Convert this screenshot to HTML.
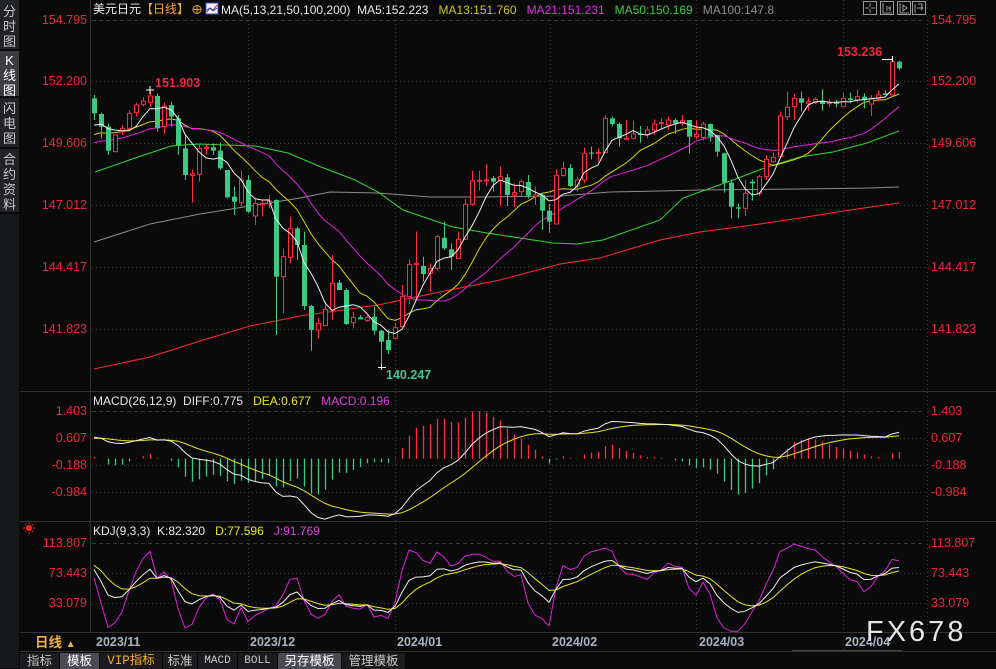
<!DOCTYPE html>
<html><head><meta charset="utf-8">
<style>
*{margin:0;padding:0;box-sizing:border-box}
body{background:#0a0a0a;width:996px;height:669px;overflow:hidden;position:relative;font-family:"Liberation Sans","Noto Sans CJK SC",sans-serif}
.t{position:absolute;white-space:nowrap;font-size:12px;line-height:14px}
.ax{position:absolute;font-size:12.5px;color:#e8283c;line-height:14px}
.axl{right:909px;text-align:right}
.axr{left:931px}
.side{position:absolute;left:0;width:19px;background:#222327;color:#c8c8c8;font-size:13px;line-height:15px;text-align:center;border-bottom:1px solid #0a0a0a}
.tab{position:absolute;top:653px;height:16px;font-size:12.5px;line-height:16px;text-align:center;color:#c8c8c8;background:#1c1c1e;border-right:1px solid #0a0a0a}
.date{position:absolute;top:635px;font-size:12.5px;font-weight:bold;color:#a8b4c4}
</style></head><body>
<svg id="s" width="996" height="669" style="position:absolute;left:0;top:0">
<g stroke="#333" stroke-width="1" fill="none">
<line x1="90.5" y1="0" x2="90.5" y2="632"/>
<line x1="20" y1="391.5" x2="996" y2="391.5"/>
<line x1="20" y1="521.5" x2="996" y2="521.5"/>
<line x1="20" y1="632.5" x2="996" y2="632.5"/>
<line x1="20" y1="651.5" x2="996" y2="651.5"/>
</g>
<g stroke="#3a3a3a" stroke-width="1" stroke-dasharray="1,3" fill="none">
<line x1="927.5" y1="0" x2="927.5" y2="632"/>
<line x1="248.5" y1="0" x2="248.5" y2="650"/>
<line x1="395.5" y1="0" x2="395.5" y2="650"/>
<line x1="550.5" y1="0" x2="550.5" y2="632"/>
<line x1="696.5" y1="0" x2="696.5" y2="632"/>
<line x1="843.5" y1="0" x2="843.5" y2="650"/>
<line x1="92" y1="81.5" x2="925" y2="81.5"/>
<line x1="92" y1="143.5" x2="925" y2="143.5"/>
<line x1="92" y1="205.5" x2="925" y2="205.5"/>
<line x1="92" y1="267.5" x2="925" y2="267.5"/>
<line x1="92" y1="329.5" x2="925" y2="329.5"/>
<line x1="92" y1="438.5" x2="925" y2="438.5"/>
<line x1="92" y1="465.5" x2="925" y2="465.5"/>
<line x1="92" y1="492.5" x2="925" y2="492.5"/>
<line x1="92" y1="573.5" x2="925" y2="573.5"/>
<line x1="92" y1="603.5" x2="925" y2="603.5"/>
</g>
<g stroke="#3a3a3a" stroke-width="1" stroke-dasharray="4,3" fill="none">
<line x1="92" y1="20.5" x2="925" y2="20.5"/>
<line x1="92" y1="411.5" x2="925" y2="411.5"/>
<line x1="92" y1="543.5" x2="925" y2="543.5"/>
</g>
<polyline fill="none" stroke="#8c8c8c" stroke-width="1" points="94,242 150,224 200,214 250,206 300,198 330,192 378,193 430,197 480,197 560,196 610,192 660,191 700,190 800,189 870,188 899,187"/>
<polyline fill="none" stroke="#ff2d2d" stroke-width="1" points="94,369 150,357 200,341 250,326 300,316 378,305 430,294 500,280 560,264 600,258 660,240 700,232 760,224 800,218 850,210 899,203"/>
<polyline fill="none" stroke="#33d633" stroke-width="1" points="95,172 138,157 171,146 198,144 255,146 288,153 321,167 355,180 378,192 403,210 453,227 487,233 553,243 577,244 603,240 637,228 660,220 683,198 733,180 767,167 800,157 833,152 867,143 899,131"/>
<g id="dyn"></g>
<!-- annotations -->
<line x1="146" y1="90" x2="154" y2="90" stroke="#fff"/><line x1="150" y1="86" x2="150" y2="94" stroke="#fff"/>
<line x1="882" y1="59.5" x2="892" y2="59.5" stroke="#fff"/><line x1="892.5" y1="56" x2="892.5" y2="62" stroke="#fff"/>
<line x1="378" y1="367.5" x2="386" y2="367.5" stroke="#fff"/><line x1="381.5" y1="364" x2="381.5" y2="370" stroke="#fff"/>
<!-- top right icons -->
<g stroke="#9a9a9a" fill="none" stroke-width="1">
<rect x="863.5" y="1.5" width="13" height="13"/><rect x="880.5" y="1.5" width="13" height="13"/><rect x="897.5" y="1.5" width="13" height="13"/><rect x="912.5" y="1.5" width="13" height="13"/>
<path d="M870 3v4M870 9v4M865 8h4M871 8h4"/>
<path d="M883 3v10h9M887 6v5M888 8h3M890 6v5"/>
<path d="M900 3v10h9M903 5l4 3-4 3z"/>
<path d="M915 4v9M917 8h6M921 6l2 2-2 2M918 4h4v2"/>
</g>
<!-- kdj icon -->
<g stroke="#ff2020" stroke-width="1">
<circle cx="29" cy="528" r="2.6" fill="#ff2020"/>
<path d="M29 522v2M29 532v2M23 528h2M33 528h2M25 524l1 1M33 524l-1 1M25 532l1-1M33 532l-1-1"/>
</g>
<!-- header icons -->
<circle cx="197" cy="9.5" r="4" fill="none" stroke="#e0a030"/><path d="M193 9.5h8M197 5.5v8" stroke="#e0a030"/>
<rect x="206" y="3" width="12" height="11" fill="#f4f4f4" stroke="#3050c0"/>
<path d="M207 12l3-4 3 2 4-5" stroke="#d02020" fill="none"/><path d="M207 10l3-2 3 3 4-3" stroke="#2040d0" fill="none"/>
</svg>

<!-- sidebar -->
<div class="side" style="top:0;height:50px;padding-top:4px">分<br>时<br>图</div>
<div class="side" style="top:51px;height:46px;padding-top:2px;background:#3c3d42;color:#fff">K<br>线<br>图</div>
<div class="side" style="top:98px;height:50px;padding-top:3px">闪<br>电<br>图</div>
<div class="side" style="top:149px;height:64px;padding-top:3px">合<br>约<br>资<br>料</div>
<div class="side" style="top:214px;height:455px;background:#17181b"></div>

<!-- header -->
<div class="t" style="left:93px;top:2px;color:#f0f0f0">美元日元<span style="color:#f0a830">【日线】</span></div>
<div class="t" style="left:221px;top:3px;color:#e8e8e8">MA(5,13,21,50,100,200)&nbsp; MA5:152.223&nbsp;&nbsp; <span style="color:#c8c818">MA13:151.760</span>&nbsp;&nbsp; <span style="color:#d838d8">MA21:151.231</span>&nbsp;&nbsp; <span style="color:#40c840">MA50:150.169</span>&nbsp;&nbsp; <span style="color:#909090">MA100:147.8</span></div>
<div class="t" style="left:93px;top:394px;color:#e8e8e8">MACD(26,12,9)&nbsp; DIFF:0.775&nbsp;&nbsp; <span style="color:#e8e820">DEA:0.677</span>&nbsp;&nbsp; <span style="color:#e040e0">MACD:0.196</span></div>
<div class="t" style="left:93px;top:524px;color:#e8e8e8">KDJ(9,3,3)&nbsp; K:82.320&nbsp;&nbsp; <span style="color:#e8e820">D:77.596</span>&nbsp;&nbsp; <span style="color:#e040e0">J:91.769</span></div>

<div class="t" style="left:155px;top:76px;color:#f0283c;font-weight:bold;font-size:12.5px">151.903</div>
<div class="t" style="left:837px;top:45px;color:#f0283c;font-weight:bold;font-size:12.5px">153.236</div>
<div class="t" style="left:386px;top:368px;color:#40c890;font-weight:bold;font-size:12.5px">140.247</div>

<!-- axes -->
<div class="ax axl" style="top:13px">154.795</div><div class="ax axr" style="top:13px">154.795</div>
<div class="ax axl" style="top:74px">152.200</div><div class="ax axr" style="top:74px">152.200</div>
<div class="ax axl" style="top:136px">149.606</div><div class="ax axr" style="top:136px">149.606</div>
<div class="ax axl" style="top:198px">147.012</div><div class="ax axr" style="top:198px">147.012</div>
<div class="ax axl" style="top:260px">144.417</div><div class="ax axr" style="top:260px">144.417</div>
<div class="ax axl" style="top:322px">141.823</div><div class="ax axr" style="top:322px">141.823</div>
<div class="ax axl" style="top:404px">1.403</div><div class="ax axr" style="top:404px">1.403</div>
<div class="ax axl" style="top:431px">0.607</div><div class="ax axr" style="top:431px">0.607</div>
<div class="ax axl" style="top:458px">-0.188</div><div class="ax axr" style="top:458px">-0.188</div>
<div class="ax axl" style="top:485px">-0.984</div><div class="ax axr" style="top:485px">-0.984</div>
<div class="ax axl" style="top:536px">113.807</div><div class="ax axr" style="top:536px">113.807</div>
<div class="ax axl" style="top:566px">73.443</div><div class="ax axr" style="top:566px">73.443</div>
<div class="ax axl" style="top:596px">33.079</div><div class="ax axr" style="top:596px">33.079</div>

<!-- dates -->
<div class="t" style="left:35px;top:636px;color:#f0b040;font-size:13.5px;font-weight:bold">日线 <span style="font-size:10px">▲</span></div>
<div class="date" style="left:96px">2023/11</div>
<div class="date" style="left:250px">2023/12</div>
<div class="date" style="left:397px">2024/01</div>
<div class="date" style="left:552px">2024/02</div>
<div class="date" style="left:699px">2024/03</div>
<div class="date" style="left:845px">2024/04</div>
<div class="t" style="left:866px;top:616px;font-size:29px;line-height:32px;color:#e6e6e6;letter-spacing:3px;text-shadow:1px 1px 1px #000">FX678</div>
<div style="position:absolute;left:792px;top:650px;width:110px;height:1px;background:#444"></div>

<!-- tabs -->
<div class="tab" style="left:20px;width:40px">指标</div>
<div class="tab" style="left:60px;width:40px;background:#4a4b52;color:#fff">模板</div>
<div class="tab" style="left:100px;width:63px;color:#f0b030;font-family:'Liberation Mono','Noto Sans CJK SC',monospace">VIP指标</div>
<div class="tab" style="left:163px;width:35px">标准</div>
<div class="tab" style="left:198px;width:40px;font-family:'Liberation Mono',monospace;font-size:11px">MACD</div>
<div class="tab" style="left:238px;width:40px;font-family:'Liberation Mono',monospace;font-size:11px">BOLL</div>
<div class="tab" style="left:278px;width:64px;background:#4a4b52;color:#fff">另存模板</div>
<div class="tab" style="left:342px;width:64px">管理模板</div>

<script>
// [type, bodyTop, bodyBot, wickTop, wickBot] in zoom coords; groups with offsets
var z8=[["g",115,160,105,180],["g",162,200,158,235],["g",200,272,190,285],["r",225,275,225,275],["r",205,215,195,225],["r",160,205,150,210],["r",135,158,128,170],["r",123,133,112,140],["r",108,128,95,140],["g",108,205,100,215],["r",138,200,128,222],["g",135,170,125,200],["g",175,255,165,285],["g",265,345,225,360],["r",342,346,328,428],["r",265,343,255,365],["r",262,265,252,285],["g",262,272,250,285],["g",272,325,248,330],["g",330,412,330,415],["g",410,425,380,465],["r",360,428,332,440],["g",360,455,345,460],["r",430,468,415,495],["r",430,432,418,470],["r",423,432,405,445],["g",420,650,418,825],["r",590,650,565,760],["r",505,592,470,610],["g",505,555,500,600],["g",555,738,515,750],["g",738,810,735,872],["r",790,810,775,835],["r",748,797,725,797],["r",670,750,585,780],["g",668,690,660,690],["g",690,792,685,795],["r",772,788,755,805],["g",772,778,765,778],["r",772,782,765,785]];
var z9=[["g",650,692,620,705],["g",692,725,690,800],["g",720,750,690,762],["r",683,715,668,718],["r",590,680,555,680],["r",493,590,478,612],["r",490,494,395,595],["g",498,522,470,545],["r",505,520,490,575],["r",410,505,405,512],["g",413,445,365,450],["g",448,470,430,510],["r",418,475,395,475],["r",313,418,297,418],["r",243,313,212,318],["r",241,244,212,272],["r",240,243,193,258],["g",234,245,228,275],["r",230,242,200,320],["g",232,285,222,318],["r",278,285,250,320],["r",245,275,238,290],["g",246,287,225,295],["r",285,290,260,315],["g",285,332,278,390],["g",332,365,312,398],["r",226,372,208,372],["r",205,226,185,230],["g",204,258,192,262],["r",240,258,230,275],["r",160,240,143,250],["g",158,160,140,178],["r",157,160,145,185],["r",55,158,45,158],["g",55,72,50,80],["g",72,115,68,140],["r",115,118,60,118],["r",102,115,62,118],["g",102,105,78,128],["r",90,104,78,115]];
var z10=[["r",252,270,238,285],["r",248,250,235,265],["r",240,255,230,270],["g",240,250,235,282],["r",242,250,225,258],["g",240,290,240,340],["r",283,290,240,298],["r",252,292,245,300],["g",252,290,250,305],["g",285,335,285,350],["g",340,428,338,458],["g",428,500,418,535],["g",502,506,490,535],["r",460,505,420,528],["g",425,430,418,482],["r",410,460,405,468],["r",358,410,345,420],["r",352,365,338,368],["r",228,350,215,352],["r",202,230,155,240],["r",175,200,162,240],["g",175,188,155,215],["r",185,190,172,212],["r",178,188,172,192],["g",182,192,148,212],["r",188,190,178,202],["g",188,192,180,202],["r",175,200,158,200],["g",175,180,158,190],["r",170,180,148,188],["g",170,180,160,205],["r",175,192,165,228],["r",165,175,150,185],["g",160,165,150,165],["r",65,165,55,165],["g",65,85,62,90]];
var C=[];
function add(a,oy){a.forEach(function(c){C.push({t:c[0],bt:oy+c[1]/3,bb:oy+c[2]/3,hi:oy+c[3]/3,lo:oy+c[4]/3});});}
add(z8,60);add(z9,100);add(z10,40);
var NS="http://www.w3.org/2000/svg",g=document.getElementById("dyn"),h="";
function X(i){return 94+7*i;}
// history padding
var pre=[];for(var k=1;k<=80;k++){var y=125+2.04*(80-k);pre.push({c:y,hi:y-3,lo:y+3});}
var all=pre.concat(C.map(function(c){return {c:c.t=="r"?c.bt:c.bb,hi:c.hi,lo:c.lo};}));
var P=pre.length;
function ma(n){var pts=[];for(var i=P;i<all.length;i++){var s=0;for(var j=0;j<n;j++)s+=all[i-j].c;pts.push(X(i-P).toFixed(1)+","+(s/n).toFixed(1));}return pts.join(" ");}
h+='<polyline fill="none" stroke="#d6d600" stroke-width="1" points="'+ma(13)+'"/>';
h+='<polyline fill="none" stroke="#e020e0" stroke-width="1" points="'+ma(21)+'"/>';
// candles
C.forEach(function(c,i){var x=X(i);
 if(c.t=="r"){h+='<line x1="'+(x+.5)+'" y1="'+c.hi+'" x2="'+(x+.5)+'" y2="'+c.bt+'" stroke="#ff2a44"/><line x1="'+(x+.5)+'" y1="'+c.bb+'" x2="'+(x+.5)+'" y2="'+c.lo+'" stroke="#ff2a44"/>';
  var hh=Math.max(c.bb-c.bt,1);h+='<rect x="'+(x-1.5)+'" y="'+c.bt+'" width="4" height="'+hh+'" fill="#0a0a0a" stroke="#ff2a44"/>';}
 else{h+='<line x1="'+(x+.5)+'" y1="'+c.hi+'" x2="'+(x+.5)+'" y2="'+c.lo+'" stroke="#3cc882"/><rect x="'+(x-2)+'" y="'+c.bt+'" width="5" height="'+Math.max(c.bb-c.bt,1)+'" fill="#3cc882"/>';}
});
h+='<polyline fill="none" stroke="#f0f0f0" stroke-width="1" points="'+ma(5)+'"/>';
// MACD
var pr=all.map(function(a){return 154.795-(a.c-20)/23.82;});
var e12=pr[0],e26=pr[0],dea=0,dif,mp1=[],mp2=[];
for(var i=0;i<pr.length;i++){e12=e12+(pr[i]-e12)*2/13;e26=e26+(pr[i]-e26)*2/27;dif=e12-e26;dea=dea+(dif-dea)*2/10;
 if(i>=P){var x=X(i-P),hv=2*(dif-dea),z=458.6,yv=z-hv*33.9;
  h+='<line x1="'+(x+.5)+'" y1="'+z+'" x2="'+(x+.5)+'" y2="'+yv.toFixed(1)+'" stroke="'+(hv>=0?"#ff2a44":"#3cc882")+'" stroke-width="1.3"/>';
  mp1.push(x+","+(z-dif*33.9).toFixed(1));mp2.push(x+","+(z-dea*33.9).toFixed(1));}}
h+='<polyline fill="none" stroke="#e8e820" points="'+mp2.join(" ")+'"/><polyline fill="none" stroke="#f0f0f0" points="'+mp1.join(" ")+'"/>';
// KDJ
var K=50,D=50,k1=[],k2=[],k3=[];
function ky(v){v=Math.max(-5,Math.min(125,v));return (573-(v-73.443)*0.743).toFixed(1);}
for(var i=8;i<all.length;i++){var mn=1e9,mx=-1e9;for(var j=0;j<9;j++){mn=Math.min(mn,all[i-j].hi);mx=Math.max(mx,all[i-j].lo);}
 var rsv=mx==mn?50:(mx-all[i].c)/(mx-mn)*100;K=K*2/3+rsv/3;D=D*2/3+K/3;var J=3*K-2*D;
 if(i>=P){var x=X(i-P);k1.push(x+","+ky(K));k2.push(x+","+ky(D));k3.push(x+","+ky(J));}}
h+='<polyline fill="none" stroke="#e020e0" points="'+k3.join(" ")+'"/><polyline fill="none" stroke="#e8e820" points="'+k2.join(" ")+'"/><polyline fill="none" stroke="#f0f0f0" points="'+k1.join(" ")+'"/>';
g.innerHTML=h;
</script>
</body></html>
